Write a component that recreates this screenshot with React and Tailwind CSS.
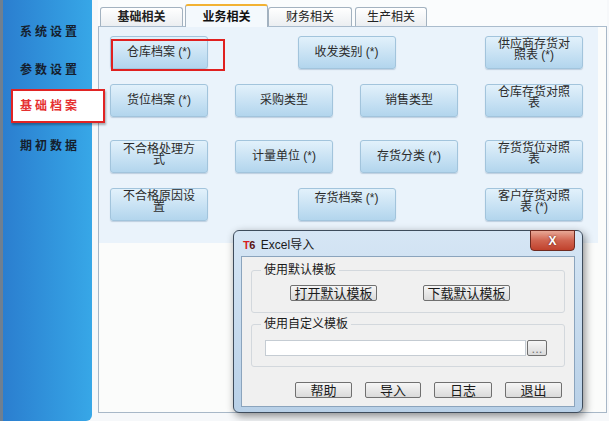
import React from "react";

const FONT = "font-['Liberation_Sans','Noto_Sans_CJK_SC',sans-serif]";

const navItems = ["系统设置", "参数设置", "基础档案", "期初数据"];

const tabs = [
  { label: "基础相关", cls: "w-[83px] h-[19px] font-semibold" },
  { label: "业务相关", cls: "w-[83px] h-[23px] font-bold", active: true },
  { label: "财务相关", cls: "w-[84px] h-[19px]" },
  { label: "生产相关", cls: "w-[72px] h-[19px] ml-[3px]" },
];

// archive buttons, laid out on a 4 column grid
const tiles = [
  { t: "仓库档案 (*)", c: "col-start-1 shadow-[0_0_5px_rgba(0,0,0,0.5)]" },
  { t: "收发类别 (*)", c: "col-start-2 col-span-2 justify-self-center" },
  { t: "供应商存货对照表 (*)", c: "col-start-4 pb-[6px]" },
  { t: "货位档案 (*)", c: "col-start-1" },
  { t: "采购类型", c: "col-start-2" },
  { t: "销售类型", c: "col-start-3" },
  { t: "仓库存货对照表", c: "col-start-4 pb-[6px]" },
  { t: "不合格处理方式", c: "col-start-1 pb-[4px]" },
  { t: "计量单位 (*)", c: "col-start-2" },
  { t: "存货分类 (*)", c: "col-start-3" },
  { t: "存货货位对照表", c: "col-start-4 pb-[6px]" },
  { t: "不合格原因设置", c: "col-start-1 pb-[6px]" },
  { t: "存货档案 (*)", c: "col-start-2 col-span-2 justify-self-center pb-[12px]" },
  { t: "客户存货对照表 (*)", c: "col-start-4 pb-[6px]" },
];

function WinButton({ children, className = "" }) {
  return (
    <button
      className={`h-[16px] flex items-center justify-center rounded-[2px] border border-[#707070] bg-gradient-to-b from-[#f6f6f6] to-[#dadada] text-[13px] leading-none text-[#1a1a1a] ${className}`}
    >
      {children}
    </button>
  );
}

function ExcelDialog() {
  return (
    <div className="absolute left-[233px] top-[230px] w-[350px] h-[183px] rounded-[6px] border border-[#3e4c5c] bg-gradient-to-b from-[#d6e6f5] to-[#b8d0e7] shadow-[2px_3px_8px_rgba(0,0,0,0.45)] flex flex-col px-[7px] pb-[5px]">
      {/* title bar */}
      <div className="h-[25px] flex items-start">
        <div className="flex items-center gap-[6px] pt-[8px] pl-[2px] text-[12px] leading-none text-[#1a1a1a]">
          <span className="font-bold text-[11px] tracking-[-0.5px]">
            <span className="text-[#d81e1e]">T</span>
            <span className="text-[#5a1010]">6</span>
          </span>
          <span>Excel导入</span>
        </div>
        <div className="ml-auto -mt-px w-[45px] h-[21px] rounded-b-[4px] border border-[#6e2a20] bg-gradient-to-b from-[#e7a897] via-[#d06450] to-[#c0412c] flex items-center justify-center">
          <span className="text-white font-bold text-[12px] leading-none [text-shadow:0_0_2px_#5a1a10]">X</span>
        </div>
      </div>

      {/* client area */}
      <div className="flex-1 bg-[#f0f0f0] border border-[#8ba4bd] px-[9px] pt-[6px] text-[12px] text-[#1a1a1a]">
        <fieldset className="border border-[#d3d8dd] rounded-[3px] pb-[11px]">
          <legend className="ml-[9px] px-[3px] leading-[14px]">使用默认模板</legend>
          <div className="flex pt-[8px] pl-[38px] gap-[46px]">
            <WinButton className="w-[87px]">打开默认模板</WinButton>
            <WinButton className="w-[87px]">下载默认模板</WinButton>
          </div>
        </fieldset>

        <fieldset className="mt-[4px] border border-[#d3d8dd] rounded-[3px] pb-[10px]">
          <legend className="ml-[9px] px-[3px] leading-[14px]">使用自定义模板</legend>
          <div className="flex items-center pt-[9px] pl-[13px]">
            <div className="w-[261px] h-[16px] bg-white border border-[#c5ccd3]" />
            <WinButton className="w-[20px] h-[15px] ml-px border-[#9a9a9a] text-[9px] text-[#777]">...</WinButton>
          </div>
        </fieldset>

        <div className="flex justify-end gap-[13px] pr-[3px] mt-[15px]">
          <WinButton className="w-[57px]">帮助</WinButton>
          <WinButton className="w-[56px] border-[#3b80b4] from-[#eef6fc] to-[#cfe4f4]">导入</WinButton>
          <WinButton className="w-[58px]">日志</WinButton>
          <WinButton className="w-[57px]">退出</WinButton>
        </div>
      </div>
    </div>
  );
}

export default function App() {
  return (
    <div className={`relative w-[609px] h-[421px] overflow-hidden flex bg-[#f6f8fa] ${FONT}`}>
      {/* left window edge */}
      <div className="w-[3px] bg-[#6f7f90]" />

      {/* sidebar */}
      <aside className="w-[89px] bg-gradient-to-r from-[#2b7ecf] to-[#37a7e7] rounded-br-[6px] pt-[13px]">
        {navItems.map((n) =>
          n === "基础档案" ? (
            <div
              key={n}
              className="relative z-10 ml-[8px] w-[94px] h-[34px] mb-[4px] bg-white border-2 border-[#e12424] shadow-[1px_2px_2px_rgba(0,0,0,0.3)] flex items-center pl-[7px] text-[12px] font-bold tracking-[3px] text-[#e53030]"
            >
              {n}
            </div>
          ) : (
            <div
              key={n}
              className="h-[38px] flex items-center pl-[17px] text-[12px] font-bold tracking-[3px] text-[#15202e]"
            >
              {n}
            </div>
          )
        )}
      </aside>

      {/* main panel */}
      <main className="ml-[6px] w-[509px] flex flex-col">
        <div className="h-[27px] flex items-end pl-[2px] border-b border-[#aabccd] bg-[#fafcfd]">
          {tabs.map((tab) =>
            tab.active ? (
              <div
                key={tab.label}
                className={`${tab.cls} relative -mb-px ml-[2px] bg-[#f4f9fd] border-x border-[#a3b2c0] border-t-2 border-t-[#f2b233] rounded-t-[3px] flex items-center justify-center text-[12px] text-[#111]`}
              >
                {tab.label}
              </div>
            ) : (
              <div
                key={tab.label}
                className={`${tab.cls} bg-gradient-to-b from-white to-[#ebeef1] border border-b-0 border-[#a3b2c0] rounded-t-[3px] flex items-center justify-center text-[12px] text-[#222]`}
              >
                {tab.label}
              </div>
            )
          )}
        </div>

        <div className="h-[386px] border-x border-b border-[#a7b7c7] bg-[#fbfcfb]">
          <div className="h-[216px] mr-[8px] bg-[#eaf3fb] pl-[11px] pt-[9px]">
            <div className="grid grid-cols-[98px_98px_98px_98px] grid-rows-[33px_33px_41px_33px] gap-x-[27px] gap-y-[15px] items-end">
              {tiles.map((tile) => (
                <button
                  key={tile.t}
                  className={`w-[98px] h-[33px] rounded-[3px] border border-[#a2c4dc] bg-gradient-to-b from-[#e2f1fb] to-[#b2d5ed] shadow-[0_1px_1px_rgba(60,100,140,0.25)] flex items-center justify-center px-[11px] text-center text-[12px] leading-[11px] text-[#2b2b2b] ${tile.c}`}
                >
                  {tile.t}
                </button>
              ))}
            </div>
          </div>
        </div>
      </main>

      {/* red annotation box */}
      <div className="absolute left-[111px] top-[39px] w-[114px] h-[32px] border-2 border-[#e0201f]" />

      <ExcelDialog />
    </div>
  );
}
